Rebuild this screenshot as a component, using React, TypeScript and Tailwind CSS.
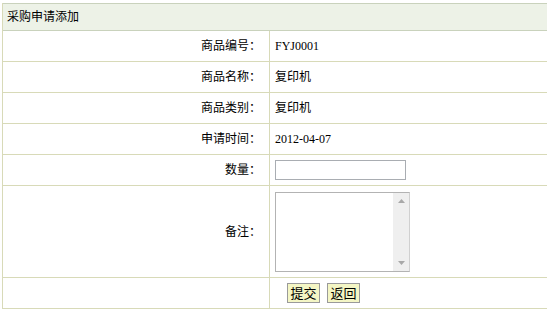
function Row({ label, children }: { label: string; children?: React.ReactNode }) {
    return (
        <div className="flex h-[31px] border-b border-[#d8dab8]">
            <div className="w-[267px] border-r border-[#d8dab8] flex items-center justify-end pr-[8px]">
                {label}
            </div>
            <div className="flex items-center pl-[5px]">{children}</div>
        </div>
    )
}

function App() {
    return (
        <div
            className="w-[547px] h-[323px] overflow-hidden bg-white pt-[3px] pl-[2px] text-[12px] text-black"
            style={{ fontFamily: '"Liberation Sans", "Noto Sans CJK SC", sans-serif' }}
        >
            <div className="w-[560px] border-l border-[#d8dab8]">
                <div className="h-[28px] bg-[#edf2e7] border-t border-b border-[#c9d2bc] flex items-center pl-[4px]">
                    采购申请添加
                </div>

                <Row label="商品编号：">
                    <span className="font-['Liberation_Serif',serif]">FYJ0001</span>
                </Row>
                <Row label="商品名称：">复印机</Row>
                <Row label="商品类别：">复印机</Row>
                <Row label="申请时间：">
                    <span className="font-['Liberation_Serif',serif]">2012-04-07</span>
                </Row>
                <Row label="数量：">
                    <input type="text" className="w-[131px] h-[20px] border border-[#a9adb2] bg-white outline-none" />
                </Row>

                <div className="flex h-[92px] border-b border-[#d8dab8]">
                    <div className="w-[267px] border-r border-[#d8dab8] flex items-center justify-end pr-[8px]">
                        备注：
                    </div>
                    <div className="flex items-center pl-[5px]">
                        <div className="w-[135px] h-[80px] border border-[#b3b3b3] border-r-[#d0d0d0] flex">
                            <textarea className="flex-1 resize-none outline-none bg-white" />
                            <div className="w-[16px] bg-[#efefef] flex flex-col justify-between items-center py-[6px]">
                                <svg width="7" height="4" viewBox="0 0 7 4"><path d="M0 4 L3.5 0 L7 4 Z" fill="#a8a8a8" /></svg>
                                <svg width="7" height="4" viewBox="0 0 7 4"><path d="M0 0 L3.5 4 L7 0 Z" fill="#a8a8a8" /></svg>
                            </div>
                        </div>
                    </div>
                </div>

                <div className="flex h-[31px] border-b border-[#d8dab8]">
                    <div className="w-[267px] border-r border-[#d8dab8]"></div>
                    <div className="flex items-center pl-[17px] gap-[7px]">
                        <button className="w-[33px] h-[20px] bg-[#f4f6c4] border border-[#9a9a9a] text-[13px] leading-none">提交</button>
                        <button className="w-[33px] h-[20px] bg-[#f4f6c4] border border-[#9a9a9a] text-[13px] leading-none">返回</button>
                    </div>
                </div>
            </div>
        </div>
    )
}

export default App;
